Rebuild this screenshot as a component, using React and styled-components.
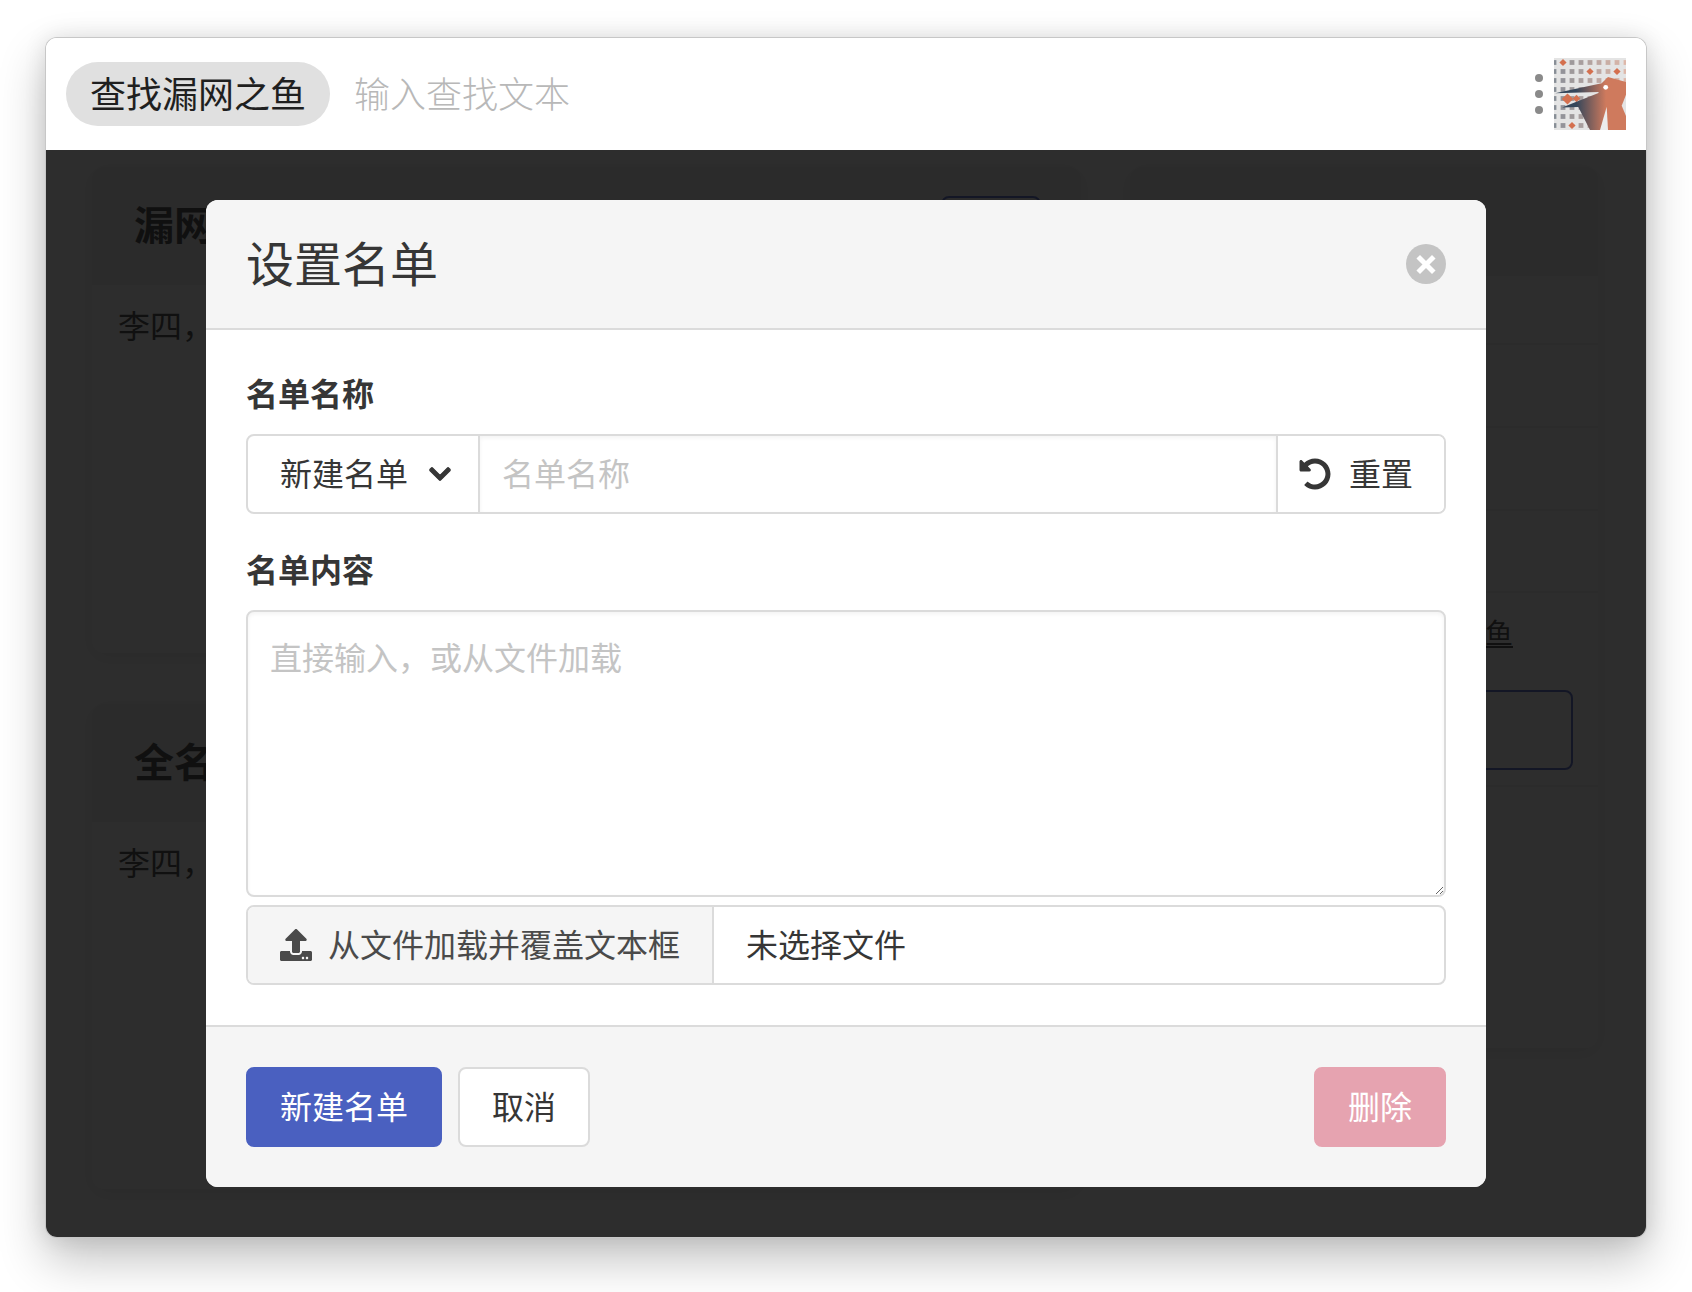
import React from "react";
import styled, { createGlobalStyle } from "styled-components";
import { FaChevronDown, FaUndoAlt, FaUpload } from "react-icons/fa";

const FONT = `"Noto Sans CJK SC", "Noto Sans", "Liberation Sans", sans-serif`;

const GridCols = [0, 9, 18, 27, 36, 45, 54, 63, 72];
const GridRows = [4.5, 13.5, 22.5, 31.5, 40.5, 49.5, 58.5, 67.5];
const OrangeDots = ["9-4.5", "36-13.5", "63-13.5", "18-67.5"];

const mix = (x) => {
  const t = x / 72;
  const r = Math.round(136 + (222 - 136) * t);
  const g = Math.round(142 + (184 - 142) * t);
  const b = Math.round(150 + (170 - 150) * t);
  return `rgb(${r}, ${g}, ${b})`;
};

const Logo = () => (
  <LogoBox width="72" height="72" viewBox="0 0 72 72">
    <defs>
      <linearGradient id="bird" x1="22" x2="52" y1="0" y2="0" gradientUnits="userSpaceOnUse">
        <stop offset="0" stopColor="#34465a" />
        <stop offset="1" stopColor="#cf7a5d" />
      </linearGradient>
    </defs>
    <rect width="72" height="72" fill="#e4e4e4" />
    {GridCols.map((x) =>
      GridRows.map((y) =>
        OrangeDots.includes(`${x}-${y}`) ? (
          <path
            key={`${x}-${y}`}
            d={`M${x} ${y - 3.6}L${x + 3.6} ${y}L${x} ${y + 3.6}L${x - 3.6} ${y}Z`}
            fill="#d4704f"
          />
        ) : (
          <rect key={`${x}-${y}`} x={x - 2.4} y={y - 2.4} width="4.8" height="4.8" fill={mix(x)} />
        )
      )
    )}
    <path d="M13.5 35.5L19.2 41L13.5 46.5L7.8 41Z" fill="#d4704f" />
    <path d="M22.5 36.8L26.2 40.5L22.5 44.2L18.8 40.5Z" fill="#d4704f" />
    <path
      d="M1 35.3L47.7 25.3L54 19L72 24V72H36L24.3 49L8 49.5L44.5 35L44.5 34Z"
      fill="url(#bird)"
    />
    <path d="M52.7 48.7L46 72H54Z" fill="#ececec" />
    <path d="M72 36.7L67.7 47.7L72 58Z" fill="#e4e4e4" />
    <circle cx="51.7" cy="29.3" r="2.4" fill="#ffffff" />
  </LogoBox>
);

const App = () => (
  <>
    <GlobalStyle />
    <Window>
      <TopBar>
        <TitlePill>查找漏网之鱼</TitlePill>
        <SearchInput placeholder="输入查找文本" />
        <MoreDots>
          <i />
          <i />
          <i />
        </MoreDots>
        <Logo />
      </TopBar>
      <Main>
        <PageGrid>
          <LeftColumn>
            <Card>
              <CardHeader>
                <CardTitle>漏网</CardTitle>
                <OutlineButton />
              </CardHeader>
              <CardText>李四，王五</CardText>
            </Card>
            <Card>
              <CardHeader>
                <CardTitle>全名单</CardTitle>
              </CardHeader>
              <CardText>李四，王五</CardText>
            </Card>
          </LeftColumn>
          <SideCard>
            <SideHeader />
            <SideRow $height={69} />
            <SideRow $height={83} />
            <SideRow $height={83} />
            <SideRow $height={82} />
            <SideRow $height={194}>
              <SideLink>查找漏网之鱼</SideLink>
              <SideButton />
            </SideRow>
          </SideCard>
        </PageGrid>
        <Overlay>
          <Dialog>
            <DialogHeader>
              <DialogTitle>设置名单</DialogTitle>
              <CloseButton aria-label="close" />
            </DialogHeader>
            <DialogBody>
              <FieldLabel>名单名称</FieldLabel>
              <InputGroup>
                <SelectBox>
                  新建名单
                  <FaChevronDown size={24} />
                </SelectBox>
                <NameInput placeholder="名单名称" />
                <ResetButton>
                  <FaUndoAlt size={32} />
                  重置
                </ResetButton>
              </InputGroup>
              <FieldLabel $top={32}>名单内容</FieldLabel>
              <ContentArea placeholder="直接输入，或从文件加载" />
              <FileGroup>
                <FileLabel>
                  <FaUpload size={32} />
                  从文件加载并覆盖文本框
                </FileLabel>
                <FileName>未选择文件</FileName>
              </FileGroup>
            </DialogBody>
            <DialogFooter>
              <FootButton $kind="primary">新建名单</FootButton>
              <FootButton>取消</FootButton>
              <FootButton $kind="danger">删除</FootButton>
            </DialogFooter>
          </Dialog>
        </Overlay>
      </Main>
    </Window>
  </>
);

export default App;

const GlobalStyle = createGlobalStyle`
  * {
    box-sizing: border-box;
  }

  html, body {
    margin: 0;
    padding: 0;
    background: #fff;
  }

  body {
    font-family: ${FONT};
    color: #363636;
    min-height: 1292px;
  }

  input, textarea, button {
    font-family: ${FONT};
  }
`;

const Window = styled.div`
  width: 1602px;
  height: 1201px;
  margin: 37px 0 0 45px;
  display: flex;
  flex-direction: column;
  border: 1px solid rgba(0, 0, 0, 0.22);
  border-radius: 12px;
  overflow: hidden;
  box-shadow: 0 22px 48px rgba(0, 0, 0, 0.24), 0 0 22px rgba(0, 0, 0, 0.1);
  background: #fff;
`;

const TopBar = styled.header`
  flex: 0 0 112px;
  display: flex;
  align-items: center;
  padding: 0 20px;
  background: #fff;
`;

const LogoBox = styled.svg`
  flex: none;
  filter: blur(0.5px);
`;

const TitlePill = styled.div`
  width: 264px;
  height: 64px;
  display: flex;
  align-items: center;
  justify-content: center;
  padding-bottom: 4px;
  border-radius: 32px;
  background: #e0e0e0;
  font-size: 36px;
  color: #1f1f1f;
`;

const SearchInput = styled.input`
  flex: 1;
  height: 64px;
  margin-left: 24px;
  border: 0;
  outline: 0;
  padding: 0 0 4px;
  font-size: 36px;
  font-weight: 300;
  background: transparent;

  &::placeholder {
    color: #b8b8b8;
    opacity: 1;
  }
`;

const MoreDots = styled.div`
  display: flex;
  flex-direction: column;
  gap: 8px;
  margin-right: 11px;

  i {
    display: block;
    width: 8px;
    height: 8px;
    border-radius: 50%;
    background: #8a8a8a;
  }
`;

const Main = styled.main`
  position: relative;
  flex: 1;
  min-height: 0;
  background: #fff;
`;

const PageGrid = styled.div`
  display: grid;
  grid-template-columns: 989px 468px;
  column-gap: 49px;
  padding: 17px 0 0 46px;
`;

const LeftColumn = styled.div`
  display: grid;
  grid-template-rows: 486px 485px;
  row-gap: 51px;
`;

const Card = styled.section`
  border-radius: 12px;
  background: #fff;
  box-shadow: 0 4px 20px rgba(10, 10, 10, 0.1);
  overflow: hidden;
`;

const CardHeader = styled.div`
  height: 118px;
  display: flex;
  align-items: flex-start;
  justify-content: space-between;
  padding: 26px 40px 0 42px;
  background: #ececec;
`;

const CardTitle = styled.div`
  font-size: 40px;
  line-height: 60px;
  font-weight: 700;
  color: #363636;
`;

const OutlineButton = styled.div`
  width: 100px;
  height: 60px;
  margin-top: 3px;
  border: 2px solid #485fc7;
  border-radius: 8px;
`;

const CardText = styled.p`
  margin: 0;
  padding: 15px 26px;
  font-size: 32px;
  line-height: 48px;
  color: #363636;
`;

const SideCard = styled.section`
  height: 881px;
  border-radius: 12px;
  background: #fff;
  box-shadow: 0 4px 20px rgba(10, 10, 10, 0.1);
  overflow: hidden;
`;

const SideHeader = styled.div`
  height: 109px;
  background: #ececec;
`;

const SideRow = styled.div`
  height: ${(props) => props.$height}px;
  display: flex;
  flex-direction: column;
  padding: 0 25px;
  border-bottom: 2px solid #f0f0f0;
`;

const SideLink = styled.a`
  align-self: flex-end;
  margin: 18px 60px 0 0;
  font-size: 28px;
  line-height: 42px;
  color: #363636;
  text-decoration: underline;
`;

const SideButton = styled.div`
  height: 80px;
  margin-top: 37px;
  border: 2px solid #485fc7;
  border-radius: 8px;
`;

const Overlay = styled.div`
  position: absolute;
  inset: 0;
  display: flex;
  align-items: center;
  justify-content: center;
  background: rgba(10, 10, 10, 0.86);
`;

const Dialog = styled.div`
  width: 1280px;
  height: 987px;
  display: flex;
  flex-direction: column;
  border-radius: 12px;
  overflow: hidden;
  background: #fff;
`;

const DialogHeader = styled.div`
  flex: 0 0 130px;
  display: flex;
  align-items: center;
  justify-content: space-between;
  padding: 0 40px;
  background: #f5f5f5;
  border-bottom: 2px solid #dbdbdb;
`;

const DialogTitle = styled.div`
  padding-bottom: 6px;
  font-size: 48px;
  line-height: 72px;
  color: #363636;
`;

const CloseButton = styled.button`
  position: relative;
  width: 40px;
  height: 40px;
  padding: 0;
  border: 0;
  border-radius: 50%;
  background: #c4c4c4;

  &::before,
  &::after {
    content: "";
    position: absolute;
    left: 9px;
    top: 17.5px;
    width: 22px;
    height: 5px;
    background: #fff;
    transform: rotate(45deg);
  }

  &::after {
    transform: rotate(-45deg);
  }
`;

const DialogBody = styled.div`
  flex: 1;
  padding: 40px;
  background: #fff;
`;

const FieldLabel = styled.label`
  display: block;
  margin: ${(props) => props.$top || 0}px 0 20px;
  font-size: 32px;
  line-height: 44px;
  font-weight: 700;
  color: #363636;
`;

const InputGroup = styled.div`
  display: flex;
  height: 80px;
  border: 2px solid #dbdbdb;
  border-radius: 8px;
  overflow: hidden;

  svg {
    flex: none;
    margin-top: 4px;
  }
`;

const SelectBox = styled.div`
  flex: 0 0 232px;
  display: flex;
  align-items: center;
  justify-content: space-between;
  padding: 0 26px 4px 32px;
  border-right: 2px solid #dbdbdb;
  font-size: 32px;
  color: #363636;

  svg {
    stroke: currentColor;
    stroke-width: 24px;
  }
`;

const NameInput = styled.input`
  flex: 1;
  min-width: 0;
  border: 0;
  outline: 0;
  padding: 0 22px 4px;
  font-size: 32px;
  color: #363636;
  box-shadow: inset 0 2px 4px rgba(10, 10, 10, 0.05);

  &::placeholder {
    color: #c4c4c4;
    opacity: 1;
  }
`;

const ResetButton = styled.button`
  flex: 0 0 168px;
  display: flex;
  align-items: center;
  gap: 18px;
  padding: 0 0 4px 21px;
  border: 0;
  border-left: 2px solid #dbdbdb;
  background: #fff;
  font-size: 32px;
  color: #363636;
`;

const ContentArea = styled.textarea`
  display: block;
  width: 100%;
  height: 287px;
  padding: 20px 22px 22px;
  border: 2px solid #dbdbdb;
  border-radius: 8px;
  outline: 0;
  font-size: 32px;
  line-height: 48px;
  color: #363636;
  box-shadow: inset 0 2px 4px rgba(10, 10, 10, 0.05);

  &::placeholder {
    color: #c4c4c4;
    opacity: 1;
  }
`;

const FileGroup = styled.div`
  display: flex;
  height: 80px;
  margin-top: 8px;
  border: 2px solid #dbdbdb;
  border-radius: 8px;
  overflow: hidden;
`;

const FileLabel = styled.div`
  flex: 0 0 466px;
  display: flex;
  align-items: center;
  gap: 16px;
  padding: 0 0 4px 32px;
  border-right: 2px solid #dbdbdb;
  background: #f5f5f5;
  font-size: 32px;
  color: #4a4a4a;

  svg {
    margin-top: 4px;
  }
`;

const FileName = styled.div`
  display: flex;
  align-items: center;
  padding: 0 0 4px 32px;
  font-size: 32px;
  color: #363636;
`;

const DialogFooter = styled.div`
  flex: 0 0 162px;
  display: flex;
  align-items: center;
  gap: 16px;
  padding: 0 40px;
  background: #f5f5f5;
  border-top: 2px solid #dbdbdb;
`;

const FootButton = styled.button`
  height: 80px;
  padding: 0 32px 4px;
  border-radius: 8px;
  border: 2px solid
    ${(props) =>
      props.$kind === "primary" ? "#4a60c0" : props.$kind === "danger" ? "#e6a3b0" : "#dbdbdb"};
  background: ${(props) =>
    props.$kind === "primary" ? "#4a60c0" : props.$kind === "danger" ? "#e6a3b0" : "#fff"};
  color: ${(props) => (props.$kind ? "#fff" : "#363636")};
  margin-left: ${(props) => (props.$kind === "danger" ? "auto" : "0")};
  font-size: 32px;
`;
